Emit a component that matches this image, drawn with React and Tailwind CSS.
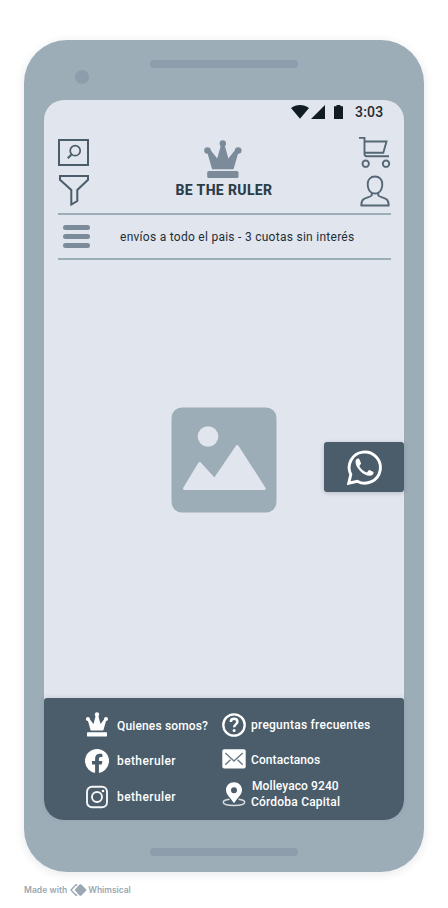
import React from 'react';

function Crown({ className }) {
  return (
    <svg viewBox="0 0 38 38" className={className} fill="currentColor">
      <circle cx="18.800" cy="3.400" r="3.200" />
      <circle cx="3.500" cy="10.500" r="3.300" />
      <circle cx="34.200" cy="10.500" r="3.300" />
      <path d="M3.300 12.500l3.200-2.500 6.700 8.500 3.800-13.500h3.600l3.800 13.500L31.100 10l3.300 2.500-4.900 16.700H8.100z" />
      <rect x="3.200" y="31" width="31.300" height="7" rx="1.500" />
    </svg>
  );
}

function FooterCrown() {
  return (
    <svg viewBox="0 0 24 25" className="h-[25px] w-6" fill="#fff">
      <circle cx="12" cy="2.400" r="2.200" />
      <circle cx="2.900" cy="7" r="2" />
      <circle cx="21" cy="7" r="2" />
      <path d="M2.700 8l1.700-1.300L8.500 12l2.400-9h2.200l2.400 9 4.100-5.300L21.300 8l-3 10.500H5.700z" />
      <rect x="2" y="20.300" width="20" height="4.200" rx=".4" />
    </svg>
  );
}

function SearchBox() {
  return (
    <svg viewBox="0 0 31 27" className="h-[27px] w-[31px]" fill="none" stroke="#4b5d6b" strokeWidth="2">
      <rect x="1" y="1" width="29" height="25" />
      <circle cx="17.200" cy="11.700" r="5" strokeWidth="1.700" />
      <path d="M13.500 15.500L9.800 19.300" strokeWidth="2" />
    </svg>
  );
}

function Funnel() {
  return (
    <svg viewBox="0 0 31 32" className="h-8 w-[31px]" fill="none" stroke="#4b5d6b" strokeWidth="2">
      <path d="M2 2h28v3.700L19.300 16v11L13.300 30.500V16L2 5.700z" />
    </svg>
  );
}

function Cart() {
  return (
    <svg viewBox="0 0 32 32" className="h-8 w-8" fill="none" stroke="#566875" strokeWidth="1.900">
      <path d="M0 1.900h5.500v16.200q0 2.200 2.200 2.200H30M5.500 5.500h22L24.300 16.700H5.500" />
      <circle cx="6.700" cy="27.700" r="3.200" />
      <circle cx="27" cy="27.700" r="3.200" />
    </svg>
  );
}

function Person() {
  return (
    <svg viewBox="0 0 30 32" className="h-8 w-[30px]" fill="none" stroke="#566875" strokeWidth="1.900" strokeLinejoin="round">
      <path d="M15 1.500c-4.500 0-7.300 3-7.300 7.500 0 4.300 2 7.500 4 8.800v2.700c-1.200 1.600-6.300 2.100-8.500 4C1.600 25.900 1.300 27.500 1.300 30.500h27.400c0-3-.3-4.600-1.900-6-2.200-1.900-7.300-2.400-8.500-4v-2.700c2-1.300 4-4.500 4-8.800 0-4.500-2.800-7.500-7.300-7.500zM11.700 17.800q3.300 1.400 6.600 0" />
    </svg>
  );
}

function StatusIcons() {
  return (
    <svg viewBox="0 0 52 14" className="h-[14px] w-[52px]" fill="#111b23">
      <path d="M0 3C5-1 13-1 18 3L9 13.700z" />
      <path d="M34 0v14H20z" />
      <path d="M43 1.300h2.500V0h4v1.300H52V14h-9z" />
    </svg>
  );
}

function Picture() {
  return (
    <svg viewBox="0 0 106 106" className="h-[106px] w-[106px]">
      <rect x=".5" y=".5" width="105" height="105" rx="10.500" fill="#9dadb8" />
      <g fill="#e1e5ed" stroke="#e1e5ed" strokeWidth="3" strokeLinejoin="round">
        <circle cx="37" cy="29.500" r="10.300" stroke="none" />
        <path d="M13.500 81.500L28.700 56.500 43.500 72.800 66.200 39.500 93.200 81.500z" />
      </g>
    </svg>
  );
}

function Whatsapp() {
  return (
    <svg viewBox="0 0 24 24" className="h-[35px] w-[35px]" fill="#fff">
      <path d="M17.900 14.900c-.3-.2-1.900-1-2.300-1.100-.3-.1-.6-.1-.8.2l-1 1.200c-.2.200-.4.200-.7.100-2.500-1.100-3.700-2.600-4.500-4-.2-.3 0-.5.100-.7l.8-1c.2-.3.1-.5 0-.8L8.500 6.500c-.3-.6-.5-.6-.9-.6-1.300 0-1.900 1.500-1.700 3 .3 2 1.700 4 3.300 5.600 1.900 1.900 4.300 3.200 6.300 3.200 1.400 0 2.700-.9 2.700-2.100 0-.4 0-.6-.3-.7z" />
      <path d="M2.600 16.800A10.700 10.700 0 1 1 7 21.400L1.200 22.800z" fill="none" stroke="#fff" strokeWidth="2" />
    </svg>
  );
}

function Facebook() {
  return (
    <svg viewBox="0 0 24 24" className="size-6">
      <circle cx="12" cy="12" r="12" fill="#fff" />
      <path d="M10.100 24v-8.400H7v-3.500h3.100V9.400c0-3.100 1.800-4.700 4.600-4.700 1.300 0 2.700.2 2.700.2v3h-1.500c-1.500 0-2 .9-2 1.900v2.300h3.400l-.5 3.500h-2.900V24z" fill="#4b5d6b" />
    </svg>
  );
}

function Instagram() {
  return (
    <svg viewBox="0 0 24 24" className="size-6" fill="none" stroke="#f4f6f8" strokeWidth="1.900">
      <rect x="2" y="1.800" width="20" height="20.400" rx="5" />
      <circle cx="12" cy="12" r="5" />
      <circle cx="18" cy="6" r="1.300" fill="#fff" stroke="none" />
    </svg>
  );
}

function Question() {
  return (
    <svg viewBox="0 0 24 24" className="size-6" fill="none" stroke="#fff" strokeWidth="2.300">
      <circle cx="12" cy="12" r="10.700" />
      <path d="M8.800 9c0-2 1.400-3.200 3.300-3.200s3.300 1.200 3.300 3c0 2.500-3.300 2.700-3.300 5.500" strokeWidth="2.500" />
      <circle cx="12.100" cy="17.600" r="1.500" fill="#fff" stroke="none" />
    </svg>
  );
}

function Mail() {
  return (
    <svg viewBox="0 0 24 20" className="h-5 w-6">
      <rect x=".3" y=".3" width="23.400" height="19.200" rx="2" fill="#fff" />
      <path d="M3.300 4l8.700 8 8.700-8M3.300 15.700l5.200-5M20.700 15.700l-5.200-5" fill="none" stroke="#6f7e8a" strokeWidth="1.500" />
    </svg>
  );
}

function Pin() {
  return (
    <svg viewBox="0 0 24 25" className="h-[25px] w-6">
      <path d="M7.500 17.300C3.500 17.800 1.300 18.900 1.300 20.200c0 1.900 4.600 3.200 10.700 3.200s10.700-1.300 10.700-3.200c0-1.300-2.200-2.400-6.200-2.900" fill="none" stroke="#d5dade" strokeWidth="1.500" />
      <path fillRule="evenodd" d="M12 .3c-4.500 0-8 3.300-8 7.700C4 13 9 16 12 21.300 15 16 20 13 20 8 20 3.600 16.500.3 12 .3zm0 4.900a3 3 0 1 1 0 6 3 3 0 0 1 0-6z" fill="#fff" />
    </svg>
  );
}

function WhimsicalMark() {
  return (
    <svg viewBox="0 0 17 12" className="h-3 w-[17px]" fill="#9ba7b1">
      <path d="M9.300.7q1.200-1 2.400 0L16.700 6l-5 5.300q-1.200 1-2.400 0L4.600 6z" />
      <path d="M7.200 1L6 .8 1 6l5 5.200 1.200-.2" fill="none" stroke="#9ba7b1" strokeWidth="1.300" />
    </svg>
  );
}

function FooterItem({ icon, children }) {
  return (
    <li className="flex h-9 items-center gap-2">
      <span className="flex w-6 justify-center">{icon}</span>
      {children}
    </li>
  );
}

export default function App() {
  return (
    <div className="flex h-[908px] w-[448px] flex-col bg-white px-6 pt-10 font-['Roboto',sans-serif] text-[#2c3d4a]">
      <div className="flex h-[832px] shrink-0 flex-col rounded-[43px] bg-[#9dadb8] px-5 shadow-[0_2px_10px_rgba(50,60,80,0.12)]">
        <div className="flex h-[60px] pt-5 pl-[31px]">
          <span className="mt-[10px] size-[14px] rounded-full bg-[#8e9dac]" />
          <span className="ml-[61px] h-2 w-[148px] rounded-full bg-[#8e9dac]" />
        </div>

        <div className="relative flex h-[720px] flex-col rounded-[20px] bg-[#e1e5ed]">
          <div className="flex h-6 items-center justify-end gap-3 pr-[21px]">
            <StatusIcons />
            <span className="w-7 text-[14px] leading-6 font-medium tracking-[0.2px] whitespace-nowrap text-[#222b33]">3:03</span>
          </div>

          <header className="mx-[14px] w-[333px]">
            <div className="flex h-[89px] justify-between">
              <div className="flex flex-col gap-2 pt-[15px]">
                <SearchBox />
                <Funnel />
              </div>
              <div className="flex flex-col items-center pt-4">
                <Crown className="-ml-[2px] size-[38px] text-[#7b8b99]" />
                <h1 className="text-[14px] leading-6 font-extrabold tracking-[0.350px] whitespace-nowrap">BE THE RULER</h1>
              </div>
              <div className="flex flex-col pt-3">
                <Cart />
                <span className="mt-[7px] ml-px">
                  <Person />
                </span>
              </div>
            </div>
            <div className="flex h-[47px] items-center border-y-2 border-[#9dadb8]">
              <button className="ml-[5px] flex w-[27px] flex-col gap-1" aria-label="Menu">
                <span className="h-[5px] rounded-full bg-[#7b8b99]" />
                <span className="h-[5px] rounded-full bg-[#7b8b99]" />
                <span className="h-[5px] rounded-full bg-[#7b8b99]" />
              </button>
              <p className="ml-[30px] text-[12px] tracking-[0.270px] whitespace-nowrap text-[#1d2d39]">envíos a todo el pais - 3 cuotas sin interés</p>
            </div>
          </header>

          <main className="flex flex-1 justify-center pt-[147px]">
            <Picture />
          </main>

          <button className="absolute top-[342px] right-0 flex h-[50px] w-20 items-center justify-center rounded-[3px] bg-[#4b5d6b] shadow-[0_1px_4px_rgba(50,60,80,0.25)]" aria-label="WhatsApp">
            <Whatsapp />
          </button>

          <footer className="flex h-[122px] rounded-t-[3px] rounded-b-[20px] bg-[#4b5d6b] pt-[9px] pl-[41px] text-[12px] font-medium whitespace-nowrap text-white shadow-[0_-1px_4px_rgba(50,60,80,0.12)]">
            <ul className="w-[137px]">
              <FooterItem icon={<span className="-mt-px"><FooterCrown /></span>}>
                <span className="pt-px tracking-[0.150px]">Quienes somos?</span>
              </FooterItem>
              <FooterItem icon={<Facebook />}>
                <span className="tracking-[0.4px]">betheruler</span>
              </FooterItem>
              <FooterItem icon={<Instagram />}>
                <span className="tracking-[0.4px]">betheruler</span>
              </FooterItem>
            </ul>
            <ul>
              <FooterItem icon={<span className="-mt-px -ml-px"><Question /></span>}>
                <span className="-ml-[3px] tracking-[0.250px]">preguntas frecuentes</span>
              </FooterItem>
              <FooterItem icon={<span className="-mt-[5px] -ml-px"><Mail /></span>}>
                <span className="-ml-[3px] -mt-[2px] tracking-[0.1px]">Contactanos</span>
              </FooterItem>
              <FooterItem icon={<span className="-mt-[5px] -ml-px"><Pin /></span>}>
                <address className="-mt-[6px] -ml-[3px] leading-4 not-italic tracking-[0.2px]">
                  <span className="block pl-px tracking-[0.1px]">Molleyaco 9240</span>
                  <span className="block">Córdoba Capital</span>
                </address>
              </FooterItem>
            </ul>
          </footer>
        </div>

        <div className="flex h-[52px] justify-center pt-7">
          <span className="h-2 w-[148px] rounded-full bg-[#8e9dac]" />
        </div>
      </div>

      <div className="flex h-9 items-center gap-[3px] font-['Inter',sans-serif] text-[8.500px] font-semibold whitespace-nowrap text-[#9ba7b1]">
        <span className="tracking-[0.060px]">Made with</span>
        <WhimsicalMark />
        <span className="-ml-[2px] tracking-[-0.050px]">Whimsical</span>
      </div>
    </div>
  );
}
